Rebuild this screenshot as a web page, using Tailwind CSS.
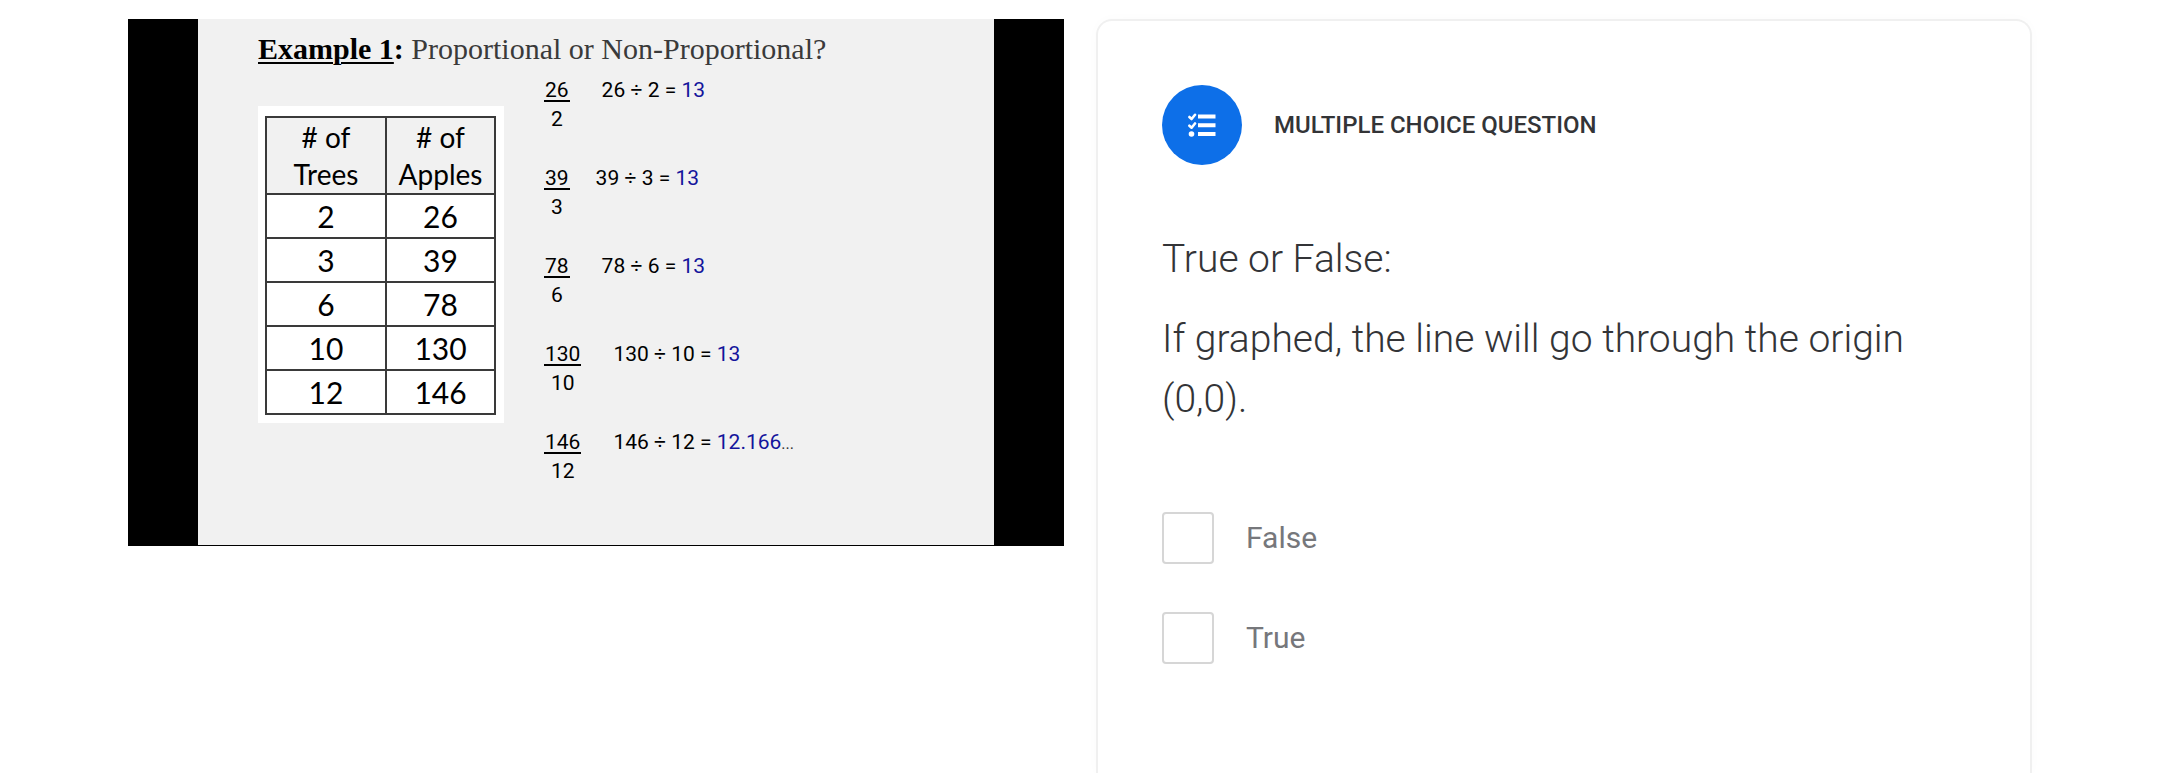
<!DOCTYPE html>
<html lang="en">
<head>
<meta charset="utf-8">
<title>Multiple Choice Question</title>
<script src="https://cdn.jsdelivr.net/npm/@tailwindcss/browser@4"></script>
</head>
<body class="bg-white">
<main class="grid min-h-screen grid-cols-2 gap-8 px-32 pt-[19px] font-['Roboto',sans-serif] text-[#333437]">
  <!-- Lesson video frame -->
  <section class="flex aspect-video self-start bg-black px-[70px] pb-px" aria-label="Lesson video">
    <div class="flex-1 bg-[#f1f1f1] pl-[60px] pt-3 text-black">
      <h1 class="font-['Liberation_Serif',serif] text-[30px] leading-9 text-[#3a3a3a]"><b class="text-black"><span class="underline decoration-2 underline-offset-3">Example 1</span>:</b> Proportional or Non-Proportional?</h1>
      <div class="flex items-start gap-10">
        <div class="mt-[39px] bg-white pt-[10px] pr-2 pb-2 pl-[7px] font-['Lato',sans-serif]">
          <table class="w-[231px] table-fixed border-collapse border-2 border-[#3a3a3a] text-center text-[30px] leading-10">
            <thead class="bg-[#f1f1f1] text-[28px] leading-[37px]">
              <tr class="h-[77px]">
                <th scope="col" class="w-[120px] border-2 border-[#3a3a3a] p-0 font-normal"># of<br>Trees</th>
                <th scope="col" class="border-2 border-[#3a3a3a] p-0 font-normal"># of<br>Apples</th>
              </tr>
            </thead>
            <tbody>
              <tr class="h-11"><td class="border-2 border-[#3a3a3a] p-0">2</td><td class="border-2 border-[#3a3a3a] p-0">26</td></tr>
              <tr class="h-11"><td class="border-2 border-[#3a3a3a] p-0">3</td><td class="border-2 border-[#3a3a3a] p-0">39</td></tr>
              <tr class="h-11"><td class="border-2 border-[#3a3a3a] p-0">6</td><td class="border-2 border-[#3a3a3a] p-0">78</td></tr>
              <tr class="h-11"><td class="border-2 border-[#3a3a3a] p-0">10</td><td class="border-2 border-[#3a3a3a] p-0">130</td></tr>
              <tr class="h-11"><td class="border-2 border-[#3a3a3a] p-0">12</td><td class="border-2 border-[#3a3a3a] p-0">146</td></tr>
            </tbody>
          </table>
        </div>
        <ul class="mt-[13px] flex flex-col gap-8 text-[21px] leading-5">
          <li class="flex items-baseline gap-8"><span class="flex flex-col text-center"><span class="border-b-2 border-black px-px">26</span><span class="leading-[34px]">2</span></span><span>26 ÷ 2 = <span class="text-[#14149c]">13</span></span></li>
          <li class="flex items-baseline gap-[26px]"><span class="flex flex-col text-center"><span class="border-b-2 border-black px-px">39</span><span class="leading-[34px]">3</span></span><span>39 ÷ 3 = <span class="text-[#14149c]">13</span></span></li>
          <li class="flex items-baseline gap-8"><span class="flex flex-col text-center"><span class="border-b-2 border-black px-px">78</span><span class="leading-[34px]">6</span></span><span>78 ÷ 6 = <span class="text-[#14149c]">13</span></span></li>
          <li class="flex items-baseline gap-8"><span class="flex flex-col text-center"><span class="border-b-2 border-black px-px">130</span><span class="leading-[34px]">10</span></span><span>130 ÷ 10 = <span class="text-[#14149c]">13</span></span></li>
          <li class="flex items-baseline gap-8"><span class="flex flex-col text-center"><span class="border-b-2 border-black px-px">146</span><span class="leading-[34px]">12</span></span><span>146 ÷ 12 = <span class="text-[#14149c]">12.166</span><span class="text-base leading-5 text-[#333]">...</span></span></li>
        </ul>
      </div>
    </div>
  </section>

  <!-- Question card -->
  <section class="rounded-t-2xl border-2 border-b-0 border-[#f0f0f0] px-16 pt-16 shadow-[0_0_12px_rgba(0,0,0,0.02)]">
    <header class="flex items-center gap-8">
      <span class="flex size-20 shrink-0 items-center justify-center rounded-full bg-[#0d6fe8]">
        <svg class="h-6 w-7" viewBox="0 0 28 24" fill="none" stroke="#fff" aria-hidden="true">
          <path d="M10 3.500h17.500M10 12.200h17.500M10 21h17.500" stroke-width="4"/>
          <path d="M1.400 4l2.200 2L7 1.800M1.400 12.700l2.200 2L7 10.500" stroke-width="2.600" stroke-linecap="round" stroke-linejoin="round"/>
          <circle cx="3.500" cy="21" r="2.800" fill="#fff" stroke="none"/>
        </svg>
      </span>
      <h2 class="text-2xl leading-8 font-medium">MULTIPLE CHOICE QUESTION</h2>
    </header>
    <div class="mt-16 flex flex-col gap-5 text-[39px] leading-[60px] font-light">
      <p>True or False:</p>
      <p>If graphed, the line will go through the origin (0,0).</p>
    </div>
    <form class="mt-[83px] flex flex-col gap-12 text-[30px] leading-[52px] text-[#76777b]">
      <label class="flex items-center gap-8"><input type="checkbox" class="size-[52px] appearance-none rounded border-2 border-[#d6d6d6] bg-white">False</label>
      <label class="flex items-center gap-8"><input type="checkbox" class="size-[52px] appearance-none rounded border-2 border-[#d6d6d6] bg-white">True</label>
    </form>
  </section>
</main>
</body>
</html>
